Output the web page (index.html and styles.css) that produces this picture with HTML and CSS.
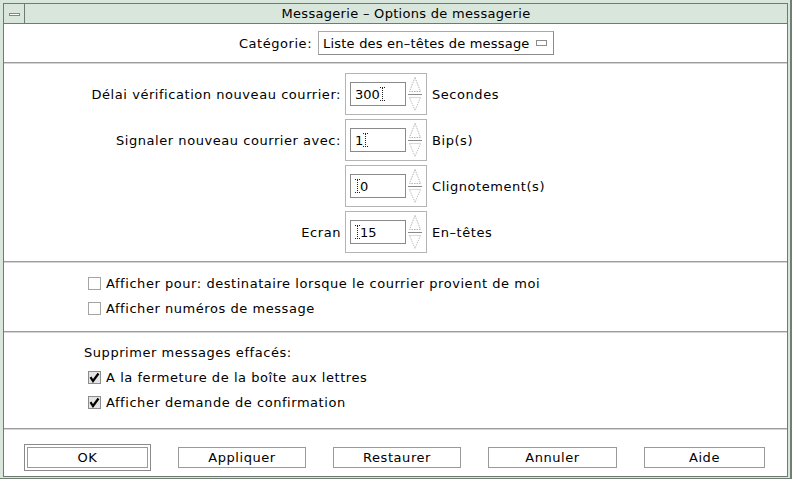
FILE: index.html
```html
<!DOCTYPE html>
<html lang="fr">
<head>
<meta charset="utf-8">
<title>Messagerie – Options de messagerie</title>
<link rel="stylesheet" href="styles.css">
</head>
<body>
<div class="window">
  <div class="inner">
    <div class="titlebar">
      <div class="menubtn"><span class="menubar"></span></div>
      <div class="title">Messagerie – Options de messagerie</div>
    </div>
    <div class="content">
      <div class="category">
        <span class="cat-label">Catégorie:</span>
        <div class="dropdown">
          <span class="dd-text">Liste des en–têtes de message</span>
          <span class="dd-icon"></span>
        </div>
      </div>
      <div class="sep"></div>
      <div class="spins">
        <div class="label">Délai vérification nouveau courrier:</div>
        <div class="spinbox">
          <div class="field">300<svg class="caret" width="5" height="14" viewBox="0 0 5 14"><path d="M0 0.5h5M0 13.5h5M2.5 1v12" stroke="#222" stroke-width="1" stroke-dasharray="1 1" fill="none"/></svg></div>
          <svg class="arrows" width="14" height="36" viewBox="0 0 14 36"><path d="M7 1.5L12.5 15.5H1.5Z" fill="none" stroke="#b4b4b4" stroke-dasharray="1.5 1"/><path d="M0 18.5H14" stroke="#8a8a8a"/><path d="M1.5 21.5H12.5L7 34.5Z" fill="none" stroke="#b4b4b4" stroke-dasharray="1 1"/></svg>
        </div>
        <div class="unit">Secondes</div>

        <div class="label">Signaler nouveau courrier avec:</div>
        <div class="spinbox">
          <div class="field">1<svg class="caret" width="5" height="14" viewBox="0 0 5 14"><path d="M0 0.5h5M0 13.5h5M2.5 1v12" stroke="#222" stroke-width="1" stroke-dasharray="1 1" fill="none"/></svg></div>
          <svg class="arrows" width="14" height="36" viewBox="0 0 14 36"><path d="M7 1.5L12.5 15.5H1.5Z" fill="none" stroke="#b4b4b4" stroke-dasharray="1.5 1"/><path d="M0 18.5H14" stroke="#8a8a8a"/><path d="M1.5 21.5H12.5L7 34.5Z" fill="none" stroke="#b4b4b4" stroke-dasharray="1 1"/></svg>
        </div>
        <div class="unit">Bip(s)</div>

        <div class="label"></div>
        <div class="spinbox">
          <div class="field"><svg class="caret" width="5" height="14" viewBox="0 0 5 14"><path d="M0 0.5h5M0 13.5h5M2.5 1v12" stroke="#222" stroke-width="1" stroke-dasharray="1 1" fill="none"/></svg>0</div>
          <svg class="arrows" width="14" height="36" viewBox="0 0 14 36"><path d="M7 1.5L12.5 15.5H1.5Z" fill="none" stroke="#b4b4b4" stroke-dasharray="1.5 1"/><path d="M0 18.5H14" stroke="#8a8a8a"/><path d="M1.5 21.5H12.5L7 34.5Z" fill="none" stroke="#b4b4b4" stroke-dasharray="1 1"/></svg>
        </div>
        <div class="unit">Clignotement(s)</div>

        <div class="label">Ecran</div>
        <div class="spinbox">
          <div class="field"><svg class="caret" width="5" height="14" viewBox="0 0 5 14"><path d="M0 0.5h5M0 13.5h5M2.5 1v12" stroke="#222" stroke-width="1" stroke-dasharray="1 1" fill="none"/></svg>15</div>
          <svg class="arrows" width="14" height="36" viewBox="0 0 14 36"><path d="M7 1.5L12.5 15.5H1.5Z" fill="none" stroke="#b4b4b4" stroke-dasharray="1.5 1"/><path d="M0 18.5H14" stroke="#8a8a8a"/><path d="M1.5 21.5H12.5L7 34.5Z" fill="none" stroke="#b4b4b4" stroke-dasharray="1 1"/></svg>
        </div>
        <div class="unit">En–têtes</div>
      </div>
      <div class="sep"></div>
      <div class="checks">
        <div class="check"><span class="box"></span>Afficher pour: destinataire lorsque le courrier provient de moi</div>
        <div class="check"><span class="box"></span>Afficher numéros de message</div>
      </div>
      <div class="sep"></div>
      <div class="delete">
        <div class="group-label">Supprimer messages effacés:</div>
        <div class="check"><svg class="box-on" width="13" height="13" viewBox="0 0 13 13"><rect x="0.5" y="0.5" width="12" height="12" fill="#e4e4e4" stroke="#8c8c8c"/><path d="M2.5 6.2L5 10L10.5 2.5" fill="none" stroke="#000" stroke-width="2.2"/></svg>A la fermeture de la boîte aux lettres</div>
        <div class="check"><svg class="box-on" width="13" height="13" viewBox="0 0 13 13"><rect x="0.5" y="0.5" width="12" height="12" fill="#e4e4e4" stroke="#8c8c8c"/><path d="M2.5 6.2L5 10L10.5 2.5" fill="none" stroke="#000" stroke-width="2.2"/></svg>Afficher demande de confirmation</div>
      </div>
      <div class="sep"></div>
      <div class="buttons">
        <div class="default-ring"><div class="btn btn-ok">OK</div></div>
        <div class="btn btn-w128">Appliquer</div>
        <div class="btn btn-w128">Restaurer</div>
        <div class="btn btn-w129">Annuler</div>
        <div class="btn btn-w121">Aide</div>
      </div>
    </div>
  </div>
</div>
</body>
</html>
```

FILE: styles.css
```css
* { box-sizing: border-box; }
html, body { margin: 0; padding: 0; }
body {
  width: 792px;
  height: 479px;
  overflow: hidden;
  font-family: "DejaVu Sans", "Noto Sans", sans-serif;
  font-size: 13px;
  letter-spacing: 0.55px;
  color: #000;
  background: #d8e6dc;
}
.window {
  width: 792px;
  height: 479px;
  background: #d8e6dc;
  padding: 3px 2px 1px 3px;
  border-right: 2px solid #707e74;
  border-bottom: 1px solid #707e74;
}
.inner {
  height: 100%;
  border: 1px solid #6e7a72;
  display: flex;
  flex-direction: column;
}
.titlebar {
  height: 20px;
  display: flex;
  border-bottom: 1px solid #6e7a72;
  background: #d8e6dc;
  flex: none;
}
.menubtn {
  width: 21px;
  border-right: 1px solid #6e7a72;
  display: flex;
  align-items: center;
  justify-content: center;
}
.menubar {
  width: 11px;
  height: 3px;
  border: 1px solid #7c8a80;
  background: #fff;
  margin-top: 1px;
}
.title {
  flex: 1;
  text-align: center;
  line-height: 19px;
  letter-spacing: 0.3px;
}
.content {
  flex: 1;
  background: #fff;
  display: flex;
  flex-direction: column;
}
.category {
  height: 38px;
  display: flex;
  align-items: center;
  justify-content: center;
  gap: 6px;
  padding-left: 2px;
  white-space: nowrap;
}
.dropdown {
  width: 236px;
  height: 24px;
  border: 1px solid #a8a8a8;
  border-right-color: #8a8a8a;
  border-bottom-color: #8a8a8a;
  display: flex;
  align-items: center;
  padding: 0 0 0 4px;
  white-space: nowrap;
}
.dd-text {
  letter-spacing: 0.2px;
}
.dd-icon {
  width: 11px;
  height: 6px;
  border: 1px solid #8c8c8c;
  background: #fff;
  margin-left: 6px;
  flex: none;
}
.sep {
  height: 2px;
  border-top: 1px solid #9c9c9c;
  border-bottom: 1px solid #d4d4d4;
  flex: none;
}
.spins {
  display: grid;
  grid-template-columns: 337px 82px auto;
  grid-auto-rows: 42px;
  column-gap: 4px;
  row-gap: 4px;
  padding: 9px 0 8px 0;
  align-items: center;
  white-space: nowrap;
}
.label { text-align: right; }
.unit { padding-left: 1px; }
.spinbox {
  height: 42px;
  border: 1px solid #b4b4b4;
  display: flex;
  align-items: center;
  padding-left: 4px;
  gap: 2px;
}
.field {
  width: 56px;
  height: 24px;
  border: 1px solid #8a8a8a;
  display: flex;
  align-items: center;
  padding-left: 4px;
  letter-spacing: 0;
}
.caret { flex: none; }
.arrows { flex: none; }
.checks {
  padding: 8px 0 10px 84px;
}
.check {
  height: 25px;
  display: flex;
  align-items: center;
  white-space: nowrap;
}
.box {
  width: 13px;
  height: 13px;
  border: 1px solid #a4a4a4;
  margin-right: 5px;
  flex: none;
}
.box-on {
  margin-right: 5px;
  flex: none;
}
.delete {
  padding: 7px 0 13px 80px;
}
.delete .check { padding-left: 4px; }
.group-label {
  height: 25px;
  display: flex;
  align-items: center;
}
.buttons {
  flex: 1;
  display: flex;
  align-items: center;
  justify-content: space-between;
  padding: 8px 22px 0 20px;
}
.btn {
  height: 21px;
  border: 1px solid #9a9a9a;
  display: flex;
  align-items: center;
  justify-content: center;
  background: #fff;
}
.default-ring {
  width: 127px;
  height: 27px;
  border: 1px solid #8a8a8a;
  padding: 2px;
}
.btn-ok { width: 100%; }
.btn-w128 { width: 128px; }
.btn-w129 { width: 129px; }
.btn-w121 { width: 121px; }
```
